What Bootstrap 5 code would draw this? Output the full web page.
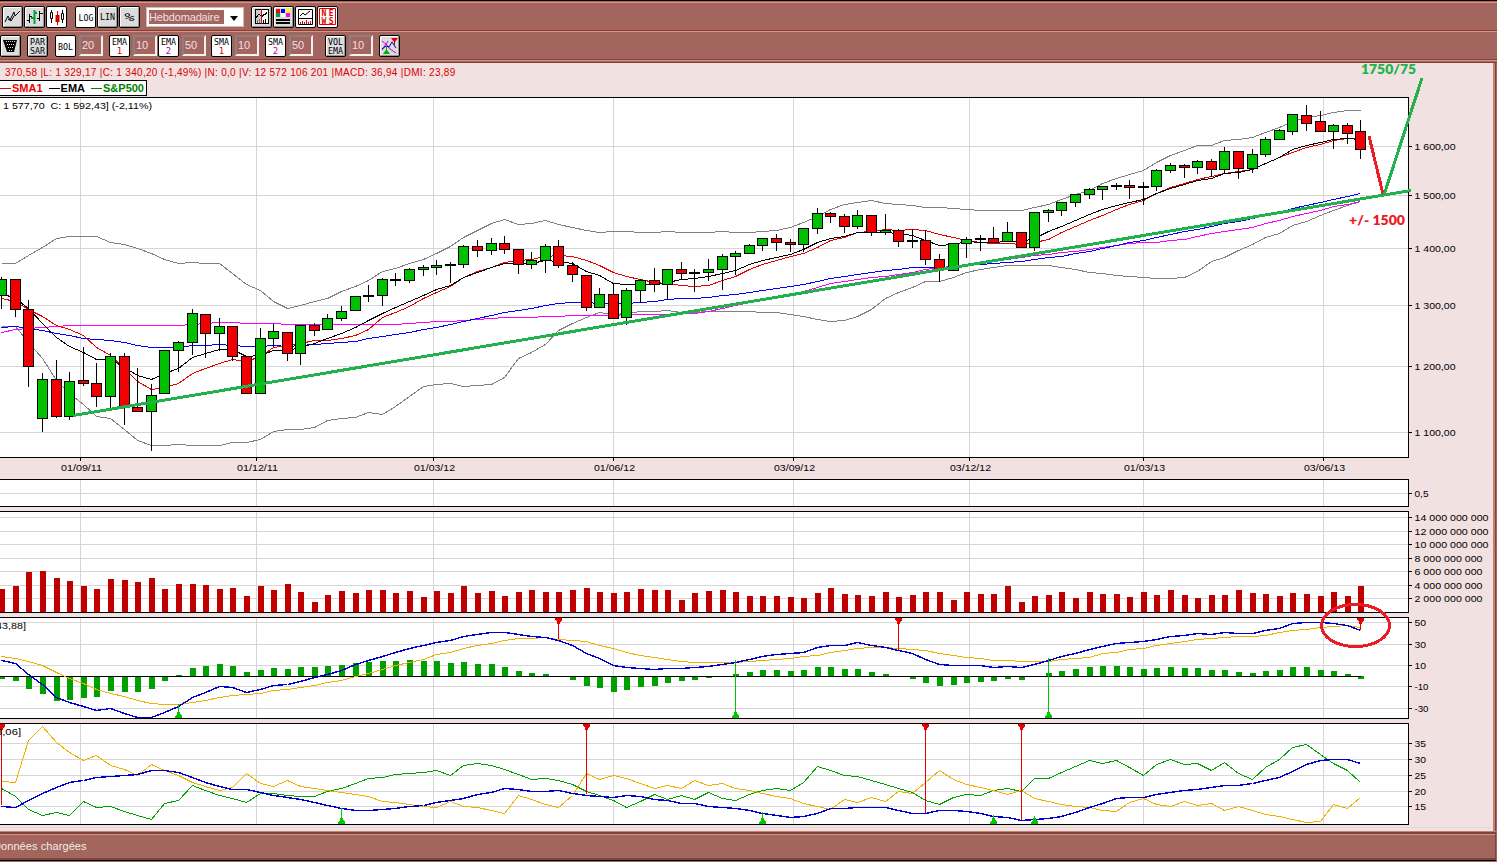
<!DOCTYPE html>
<html lang="fr">
<head>
    <meta charset="UTF-8">
    <meta name="viewport" content="width=device-width, initial-scale=1.0">
    <title>S&amp;P500 - Hebdomadaire</title>
    <link href="https://cdn.jsdelivr.net/npm/bootstrap@5.3.0/dist/css/bootstrap.min.css" rel="stylesheet">
    <style>
        body {
            width: 1497px;
            height: 862px;
            font-family: "Liberation Sans", Arial, sans-serif;
            background-color: #a3665e;
            overflow: hidden;
        }
        .top-edge {
            height: 1px;
            background-color: #000;
        }
        .tool-row {
            background-color: #a3665e;
            border-top: 1px solid #e88b80;
            border-bottom: 1px solid #7b443d;
        }
        .tool-row.first {
            height: 29px;
            margin-top: 1px;
            padding: 3px 0 0 2px;
        }
        .tool-row.second {
            height: 29px;
            padding: 3px 0 0 0;
        }
        .tool-btn {
            width: 21px;
            height: 22px;
            padding: 0;
            border: 1px solid #000;
            border-radius: 2px;
            background-color: #dcdcdc;
            box-shadow: inset 1px 1px 0 #fff, inset -1px -1px 0 #999;
            line-height: 0;
            flex: none;
        }
        .tool-btn.on {
            background-color: #fff;
            box-shadow: none;
        }
        .tool-btn svg {
            width: 19px;
            height: 20px;
            display: block;
        }
        .tool-btn text {
            font-family: "DejaVu Sans Mono", "Liberation Mono", monospace;
            text-anchor: middle;
        }
        .log-btn {
            margin-left: 7px;
        }
        .gap-1px {
            gap: 1px;
        }
        .period {
            width: 98px;
            height: 20px;
            background-color: #fff;
            border: 1px solid #d8b8b4;
            padding: 2px;
            margin: 1px 6px 0 5px;
            font-size: 11px;
            letter-spacing: -0.15px;
            color: #f1dfe6;
        }
        .period .period-text {
            width: 75px;
            background-color: #a3665e;
            line-height: 14px;
        }
        .period .arrow {
            border: 4px solid transparent;
            border-top: 5px solid #000;
            border-bottom: 0;
            margin: 6px 0 0 6px;
        }
        .tool-num {
            width: 24px;
            height: 21px;
            border: 2px solid;
            border-color: #8b8080 #f5efef #f5efef #8b8080;
            font-size: 11px;
            line-height: 16px;
            padding-left: 1px;
            color: #f1dfe6;
            flex: none;
        }
        .edge {
            height: 3px;
            background: linear-gradient(#e88b80 33%, #a3665e 33% 66%, #7b443d 66%);
        }
        .chart-area {
            width: 1495px;
            height: 768px;
            background-color: #f1e1e1;
            border-right: 2px solid #c87b71;
            box-shadow: 1px 0 0 #7b443d;
        }
        .quote-line {
            height: 17px;
            padding-left: 5px;
            color: #d80000;
            font-size: 10px;
            line-height: 19px;
            letter-spacing: 0.3px;
            white-space: pre;
        }
        .legend-box {
            width: 147px;
            height: 16px;
            background-color: #fff;
            border: 1px solid #000;
            border-left: 0;
            font-size: 11px;
            font-weight: bold;
        }
        .legend-box i {
            height: 1px;
            display: block;
            background-color: currentColor;
        }
        .chart {
            display: block;
            overflow: visible;
            shape-rendering: crispEdges;
        }
        .chart text {
            font-size: 9.7px;
        }
        .chart .note {
            font-family: Lato, "Open Sans", sans-serif;
            font-size: 13px;
            font-weight: 800;
        }
        .status-bar {
            height: 31px;
            border-top: 1px solid #c87b71;
            border-bottom: 1px solid #a3665e;
        }
        .status-bar .status-text {
            height: 28px;
            width: 1496px;
            border-top: 2px solid #7b443d;
            border-right: 1px solid #7b443d;
            border-bottom: 2px solid #7b443d;
            box-shadow: inset 0 1px 0 #e88b80, 0 1px 0 #000;
            color: #f3ecec;
            font-size: 11px;
            line-height: 24px;
            letter-spacing: 0.08px;
            text-indent: -7px;
            overflow: hidden;
        }
    </style>
</head>
<body class="d-flex flex-column">
    <div class="top-edge"></div>
    <!-- Chart type, scale and period -->
    <div class="tool-row first d-flex align-items-start gap-1px">
        <button class="tool-btn"><svg viewBox="0 0 19 20"><path d="M2 15L5 9L7 13L11 5L12 9L17 4M5 12L8 14L11 9" fill="none" stroke="#000"/></svg></button>
        <button class="tool-btn"><svg viewBox="0 0 19 20"><path d="M4.500 7V16M2 13.500H4M5 9.500H7M14.500 4V14M12 11.500H14M15 6.500H18" stroke="#000" fill="none"/><path d="M9.500 3V17M6 11H9M10 6H12" stroke="#00a040" stroke-width="2"/></svg></button>
        <button class="tool-btn on"><svg viewBox="0 0 19 20"><path d="M4.500 3V16M15.500 3V16" stroke="#000"/><path d="M3.500 5.500h2v6h-2zM14.500 6.500h2v6h-2z" fill="#fff" stroke="#000"/><path d="M10.500 4V18" stroke="#d00000"/><path d="M8.500 8h4v7h-4z" fill="#d00000"/></svg></button>
        <button class="tool-btn on log-btn"><svg viewBox="0 0 19 20"><text x="10" y="14" font-size="9" textLength="15" lengthAdjust="spacingAndGlyphs">LOG</text></svg></button>
        <button class="tool-btn"><svg viewBox="0 0 19 20"><text x="9.500" y="13" font-size="9" textLength="15" lengthAdjust="spacingAndGlyphs">LIN</text></svg></button>
        <button class="tool-btn"><svg viewBox="0 0 19 20"><text x="9.500" y="13.500" font-size="11" textLength="10" lengthAdjust="spacingAndGlyphs">%</text></svg></button>
        <div class="period d-flex"><div class="period-text">Hebdomadaire</div><div class="arrow"></div></div>
        <button class="tool-btn"><svg viewBox="0 0 19 20" shape-rendering="crispEdges"><path d="M3 2.500h13v14h-13z" fill="#fff" stroke="#000"/><path d="M3.500 3h5v13h-5z" fill="#ccc"/><path d="M4 11L7 7L10 10L12 7L13 8L15 5" fill="none" stroke="#000"/><path d="M11.500 13V16M13.500 12V16" stroke="#000"/><path d="M5.500 13V16M7.500 12V16" stroke="#777"/><path d="M9.500 2V17" stroke="#e00000"/></svg></button>
        <button class="tool-btn"><svg viewBox="0 0 19 20" shape-rendering="crispEdges"><path d="M2 2h4v4h-4z" fill="#f00"/><path d="M7 2h4v4h-4z" fill="#00f"/><path d="M12 2h4v4h-4z" fill="#ff0"/><path d="M2 6h4v4h-4z" fill="#00a040"/><path d="M7 6h4v4h-4z" fill="#fff"/><path d="M12 6h4v4h-4z" fill="#f0f"/><path d="M2 13h14M2 16h14" stroke="#000" stroke-width="2"/></svg></button>
        <button class="tool-btn on"><svg viewBox="0 0 19 20"><path d="M2.500 2.500h14v15h-14z" fill="none" stroke="#000"/><path d="M3 11.500h13M4 9L7 6L9 8L14 4" fill="none" stroke="#000"/><path d="M4.500 15V17M6.500 14V17M8.500 15V17M10.500 13V17M12.500 15V17M14.500 14V17" stroke="#e00000"/></svg></button>
        <button class="tool-btn on"><svg viewBox="0 0 19 20"><path d="M1.500 1.500h16v16h-16z" fill="none" stroke="#e00000"/><text x="9.500" y="9" font-size="8" font-weight="bold" fill="#e00000" textLength="12">NE</text><text x="9.500" y="16.500" font-size="8" font-weight="bold" fill="#e00000" textLength="12">WS</text></svg></button>
    </div>
    <!-- Indicators -->
    <div class="tool-row second d-flex align-items-start" id="indicators">
        <button class="tool-btn"><svg viewBox="0 0 19 20"><path d="M2 4h14l-3 12h-7z" fill="#000"/><path d="M5 5.500h9M6 8.500h8M7 11.500h6M8 14.500h4" stroke="#ddd" stroke-width="1" stroke-dasharray="1 1"/></svg></button>
    </div>
    <div class="edge"></div>

    <div class="chart-area">
        <div class="quote-line">370,58 |L: 1 329,17 |C: 1 340,20 (-1,49%) |N: 0,0 |V: 12 572 106 201 |MACD: 36,94 |DMI: 23,89</div>
        <div class="legend-box d-flex align-items-center"></div>
        <svg class="chart" id="chart" width="1493" height="734" viewBox="0 96 1493 734"></svg>
    </div>

    <div class="status-bar">
        <div class="status-text">Données chargées</div>
    </div>

    <script src="https://cdn.jsdelivr.net/npm/bootstrap@5.3.0/dist/js/bootstrap.bundle.min.js"></script>
    <script>
        // Indicator buttons: [margin before, line 1, line 2, second line colour, pressed, value]
        const indicators = [
            [6, "PAR", "SAR", "#000", false, null],
            [7, "BOL", "", "#000", true, "20"],
            [6, "EMA", "1", "#e00000", true, "10"],
            [1, "EMA", "2", "#b000b0", true, "50"],
            [5, "SMA", "1", "#e00000", true, "10"],
            [6, "SMA", "2", "#b000b0", true, "50"],
            [12, "VOL", "EMA", "#000", false, "10"],
        ];
        const row = document.getElementById("indicators");
        const fit = 'textLength="15" lengthAdjust="spacingAndGlyphs"';
        indicators.forEach(([gap, a, b, color, on, value]) => {
            const y = b ? 9 : 14;
            row.insertAdjacentHTML("beforeend",
                `<button class="tool-btn ${on ? "on" : ""}" style="margin-left:${gap}px"><svg viewBox="0 0 19 20">
                <text x="9.500" y="${y}" font-size="9" ${fit}>${a}</text>
                <text x="9.500" y="17.500" font-size="9" fill="${color}" ${b.length > 1 ? fit : ""}>${b}</text></svg></button>` +
                (value ? `<div class="tool-num" style="margin-left:3px">${value}</div>` : ""));
        });
        row.insertAdjacentHTML("beforeend",
            `<button class="tool-btn" style="margin-left:6px"><svg viewBox="0 0 19 20">
            <path d="M2 5L7 9L10 13L16 17M2 14L8 5" fill="none" stroke="#d000d0"/>
            <path d="M2 13L6 10L9 11L12 6L16 12" fill="none" stroke="#0000d0"/>
            <path d="M11 2h7l-3 4v4h-1v-4z" fill="#e00000"/><path d="M6 11h1v3l3 4h-7l3-4z" fill="#00b000"/></svg></button>`);

        // Legend
        document.querySelector(".legend-box").innerHTML = [
            ["#e60000", 11, "SMA1", 6], ["#000", 11, "EMA", 6], ["#008000", 11, "S&amp;P500", 0],
        ].map(([c, w, t, gap]) => `<span class="d-flex align-items-center" style="color:${c};margin-right:${gap}px"><i style="width:${w}px;margin-right:1px"></i>${t}</span>`).join("");

        // One value per week, as y on the chart
        const n = s => s.trim().split(/\s+/).map(Number);
        const X = i => Math.round(1.3 + 13.59 * i);

        // top, bottom, high, low, type (g up, r down, d doji)
        const candles = `279 295 277 308 g|279 309 279 316 r|309 366 300 386 r|379 418 373 431 g|379 416 360 417 r|381 416 372 419 g|380 383 347 385 r|383 396 363 406 r|356 396 353 408 g|356 407 353 424 r|407 411 368 411 r|395 411 384 450 g|350 393 350 393 g|342 350 341 371 g|313 342 309 354 g|314 333 314 357 r|326 333 318 350 g|326 356 326 360 r|356 393 356 393 r|338 393 328 393 g|331 338 324 346 g|332 353 332 360 r|325 353 325 364 g|325 330 323 335 r|318 329 314 329 g|311 318 306 320 g|296 310 296 310 g|295 296 285 301 d|279 295 278 305 g|279 280 273 285 d|269 280 268 282 g|267 269 265 275 g|265 267 260 274 g|264 265 262 282 d|246 264 245 267 g|246 250 240 256 r|243 250 238 254 g|243 249 236 253 r|249 264 249 273 r|260 264 252 268 g|246 260 244 272 g|246 265 240 267 r|265 274 262 281 r|275 307 275 310 r|294 307 288 307 g|294 318 283 318 r|290 317 288 324 g|280 290 279 302 g|280 284 268 291 r|269 284 269 299 g|269 273 262 278 r|272 273 269 291 d|269 272 259 280 g|256 269 254 289 g|253 256 251 274 g|245 253 244 253 g|238 245 238 250 g|238 242 234 250 r|242 244 239 251 r|228 244 228 251 g|213 228 208 233 g|213 216 212 222 r|216 226 214 232 r|215 226 210 228 g|215 232 215 235 r|230 232 214 234 g|230 241 229 246 r|240 241 229 247 d|240 259 230 264 r|259 269 254 281 r|243 270 243 270 g|239 243 237 257 g|238 239 235 250 d|238 242 227 242 r|232 241 222 241 g|232 247 232 247 r|212 247 212 250 g|210 212 209 221 g|202 210 202 215 g|194 202 194 206 g|189 194 188 198 g|186 189 186 199 g|185 186 183 189 d|185 187 180 198 r|186 187 182 204 d|170 186 169 190 g|165 170 163 172 g|165 167 164 177 r|161 167 160 173 g|161 169 159 176 r|151 169 147 172 g|151 168 151 178 r|154 168 149 172 g|139 154 137 156 g|130 139 129 139 g|114 131 114 134 g|115 123 105 130 r|121 131 111 131 r|125 131 124 148 g|125 133 123 143 r|131 149 120 158 r`.split("|");

        const bbUp = n(`263 263 255 247 238 236 236 236 242 244 248 253 259 263 262 263 263 273 284 290 301 308 305 301 298 291 286 280 271 268 263 259 253 246 237 230 223 219 224 223 220 224 227 230 232 231 231 232 232 231 232 232 232 231 232 232 231 230 227 222 216 209 204 202 200 203 204 205 207 207 208 209 210 210 210 210 207 204 199 194 190 183 178 174 170 162 155 150 145 145 140 139 137 132 127 121 117 115 112 110 110`);
        const bbLow = n(`326 326 342 358 380 393 404 416 418 429 440 445 445 444 445 445 445 442 442 439 431 429 429 427 420 418 417 412 414 406 396 386 384 383 386 385 384 377 358 352 344 330 323 317 312 314 313 311 311 310 312 312 311 311 311 311 312 312 314 316 319 321 320 316 309 298 292 287 281 281 277 272 269 267 265 265 265 265 267 269 272 273 275 276 277 278 278 277 271 261 257 250 244 237 233 225 221 215 210 205 201`);
        const sma50 = n(`332 329 328 327 326 325 325 325 325 325 325 325 325 325 324 323 322 322 323 323 323 324 324 324 324 324 324 324 324 324 323 322 321 321 320 319 318 317 317 317 316 316 315 315 315 315 314 314 314 314 313 313 311 308 305 302 299 297 294 291 287 283 281 279 277 276 274 272 269 267 266 264 262 261 259 257 255 254 252 251 249 247 245 243 242 242 240 239 236 233 231 229 227 223 220 216 213 210 206 204 201`);
        const ema50 = n(`327 326 328 330 333 335 338 339 340 342 345 347 347 347 345 345 344 345 346 346 345 346 345 344 343 342 341 338 336 334 332 329 327 324 321 318 315 312 310 308 305 303 302 302 303 303 303 302 301 299 298 298 297 295 294 292 290 288 286 284 281 278 276 274 272 270 269 267 267 267 267 265 264 263 262 261 259 257 256 253 251 248 245 242 240 237 234 231 229 226 223 221 218 215 212 208 205 202 199 196 193`);
        const sma10 = n(`298 301 309 316 325 329 335 347 355 368 381 389 387 383 373 368 363 359 361 356 347 345 343 340 340 338 335 329 317 312 306 298 292 286 277 271 267 262 260 259 256 255 256 260 265 272 276 279 282 283 285 286 285 280 276 269 264 260 256 253 247 240 237 232 231 229 230 229 230 234 237 240 242 243 243 244 242 239 232 226 220 215 209 204 200 193 187 183 179 176 173 171 169 163 157 152 147 144 140 138 138`);
        const ema10 = n(`293 298 308 323 337 346 352 359 359 367 375 379 373 368 357 353 349 349 356 355 350 350 347 343 338 333 327 320 313 307 301 295 289 285 277 272 267 263 263 263 260 261 263 271 275 283 284 284 284 282 279 278 276 273 270 264 260 257 254 249 242 238 236 232 232 232 233 235 240 245 244 241 242 242 241 241 238 231 226 220 214 209 205 202 199 193 188 184 180 178 173 172 169 163 157 149 145 142 139 138 139`);
        const volume = n(`589 586 572 571 578 581 586 589 579 580 582 578 589 584 584 585 589 588 596 586 590 584 592 602 595 591 593 590 590 593 591 597 591 593 586 593 591 596 592 590 592 592 590 588 592 593 592 589 590 590 600 593 591 590 592 596 596 596 597 598 593 588 594 595 596 592 597 595 592 592 600 592 594 594 586 602 596 595 592 598 592 594 594 597 592 595 590 595 598 595 595 590 593 594 596 593 594 596 592 596 586`);
        const hist = n(`679 681 689 694 701 700 698 697 691 692 692 689 681 675 668 666 664 666 672 670 668 669 667 667 666 665 663 662 661 661 660 661 661 663 662 664 664 667 671 673 674 676 680 686 688 692 690 687 686 683 681 680 678 676 674 672 670 670 671 670 667 667 669 669 672 674 676 679 683 686 685 683 682 681 679 680 676 673 671 669 667 666 666 667 669 668 667 668 668 670 670 672 673 671 670 667 667 670 671 674 679`);
        const macd = n(`660 663 674 684 697 702 706 710 708 713 717 717 712 706 697 692 686 687 692 689 685 684 681 677 674 670 664 660 656 652 648 645 642 640 636 634 632 632 634 636 637 640 645 653 658 665 667 668 669 668 668 667 666 664 662 659 656 654 653 652 647 645 645 642 645 647 650 653 659 664 665 665 665 667 666 667 664 660 656 653 649 646 643 642 641 639 636 635 633 634 632 633 633 630 628 623 622 622 623 625 630`);
        const signal = n(`656 658 661 665 672 678 683 689 693 696 700 703 704 704 702 700 697 695 694 693 690 689 687 685 682 680 676 673 669 665 662 659 654 652 648 645 643 640 638 638 637 639 640 641 645 648 652 655 657 659 661 662 662 662 662 661 660 659 658 656 655 652 650 648 647 647 648 649 650 653 655 657 658 660 660 661 661 661 659 658 657 653 652 649 648 645 643 641 639 638 637 636 636 635 632 630 629 627 626 625 627`);
        const diPlus = n(`788 796 809 815 812 815 801 807 806 811 815 819 803 800 785 790 795 798 802 793 793 795 796 796 791 788 783 778 777 774 773 772 770 775 765 763 765 769 774 779 778 780 784 791 795 800 807 801 794 799 795 799 792 798 800 794 790 788 790 782 766 770 775 776 780 784 788 792 800 804 797 794 795 790 788 791 778 778 772 766 760 763 760 767 775 764 759 764 763 770 762 773 779 767 759 747 744 754 763 770 782`);
        const diMinus = n(`781 782 740 726 742 752 760 755 765 769 775 764 770 775 782 786 790 787 773 783 786 780 786 788 790 792 794 796 801 802 804 806 807 801 806 807 810 813 795 799 804 807 795 773 779 775 778 783 788 785 788 780 785 783 788 790 793 796 798 803 806 809 799 802 797 801 791 793 782 770 779 784 787 790 794 790 798 801 804 806 807 810 811 802 798 804 806 801 805 803 810 806 810 814 816 819 822 821 804 808 797`);
        const adx = n(`806 807 800 793 787 782 780 777 776 775 774 770 770 772 777 782 786 789 789 792 795 797 799 802 805 808 810 810 809 808 806 805 802 800 798 794 792 788 789 791 791 790 793 795 796 797 795 796 799 800 803 803 806 807 808 810 813 815 817 816 813 808 808 807 807 807 810 813 813 810 810 811 813 816 817 820 819 818 816 812 807 803 798 797 797 794 792 790 789 787 785 785 783 780 777 771 764 760 759 759 763`);

        let out = "";
        const line = (x1, y1, x2, y2, c, w = 1) => out += `<path d="M${x1} ${y1}L${x2} ${y2}" stroke="${c}" stroke-width="${w}"/>`;
        const rect = (x, y, w, h, c) => out += `<rect x="${x}" y="${y}" width="${w}" height="${h}" fill="${c}"/>`;
        const curve = (ys, c, w = 1) => out += `<polyline points="${ys.map((y, i) => `${X(i) + .5},${y + .5}`).join(" ")}" fill="none" stroke="${c}" stroke-width="${w}"/>`;
        const text = (s, x, y, len, extra = "") => out += `<text x="${x}" y="${y}" ${len ? `textLength="${len}" lengthAdjust="spacingAndGlyphs"` : ""} ${extra}>${s}</text>`;

        const months = [[80, "01/09/11"], [256, "01/12/11"], [433, "01/03/12"], [613, "01/06/12"], [793, "03/09/12"], [969, "03/12/12"], [1143, "01/03/13"], [1323, "03/06/13"]];
        const panels = [
            [97, 457, [[146, "1 600,00"], [195, "1 500,00"], [248, "1 400,00"], [305, "1 300,00"], [366, "1 200,00"], [432, "1 100,00"]]],
            [479, 506, [[493, "0,5"]]],
            [511, 612, [[517, "14 000 000 000"], [531, "12 000 000 000"], [544, "10 000 000 000"], [558, "8 000 000 000"], [571, "6 000 000 000"], [585, "4 000 000 000"], [598, "2 000 000 000"]]],
            [617, 718, [[622, "50"], [644, "30"], [665, "10"], [686, "-10"], [708, "-30"]]],
            [723, 824, [[743, "35"], [759, "30"], [775, "25"], [791, "20"], [806, "15"]]],
        ];
        const labelWidth = { 14: 74, 13: 68, 8: 41, 3: 14, 2: 11.5 };
        panels.forEach(([top, bottom, ticks]) => {
            rect(0, top, 1408, bottom - top, "#fff");
            months.forEach(([x]) => rect(x, top, 1, bottom - top, "#d6d6d6"));
            ticks.forEach(([y, label]) => {
                rect(0, y, 1408, 1, "#d6d6d6");
                rect(1408, y, 4, 1, "#000");
                text(label, 1414.5, y + 4, labelWidth[label.length]);
            });
        });
        months.forEach(([x, label]) => {
            rect(x, 457, 1, 4, "#000");
            text(label, x - 19, 471, 41);
        });

        // Price panel
        curve(bbUp, "#808080");
        curve(bbLow, "#808080");
        curve(sma50, "#f0f");
        curve(ema50, "#00f");
        curve(sma10, "#e60000");
        curve(ema10, "#000");
        candles.forEach((c, i) => {
            const [top, bottom, high, low, type] = c.split(" ");
            const x = X(i);
            rect(x, high, 1, low - high + 1, "#000");
            rect(x - 5, top, 11, bottom - top + 1, "#000");
            if (type !== "d") rect(x - 4, +top + 1, 9, Math.max(1, bottom - top - 1), type === "g" ? "#00c000" : "#f00000");
        });

        // Volume, MACD histogram
        volume.forEach((y, i) => rect(X(i) - 2, y, 6, 612 - y, "#c00000"));
        hist.forEach((y, i) => rect(X(i) - 2, Math.min(y, 676), 6, Math.abs(y - 676), "#00a000"));
        rect(0, 676, 1361, 1, "#000");
        curve(signal, "#f0b000");
        curve(macd, "#0000d0", 1.4);
        curve(diPlus, "#00a000");
        curve(diMinus, "#f0b000");
        curve(adx, "#0000d0", 1.4);

        // Buy and sell signals
        const sell = (x, top, end) => {
            rect(x, top, 1, end - top, "#e60000");
            out += `<path d="M${x - 3} ${top}h7v2l-2 2v2h-3v-2l-2-2z" fill="#e60000"/>`;
        };
        const buy = (x, start, bottom) => {
            rect(x, start, 1, bottom - start, "#00c800");
            out += `<path d="M${x - 3} ${bottom}h7v-2l-2-2v-2h-3v2l-2 2z" fill="#00c800"/>`;
        };
        [[558, 639], [898, 650], [1360, 630]].forEach(([x, e]) => sell(x, 618, e));
        [[178, 704], [735, 660], [1048, 658]].forEach(([x, s]) => buy(x, s, 718));
        [[1, 805], [586, 794], [925, 813], [1021, 820]].forEach(([x, e]) => sell(x, 724, e));
        [[341, 808], [762, 812], [993, 815], [1034, 816]].forEach(([x, s]) => buy(x, s, 824));

        panels.forEach(([top, bottom]) => {
            rect(0, top, 1409, 1, "#000");
            rect(0, bottom, 1409, 1, "#000");
            rect(1408, top, 1, bottom - top, "#000");
        });
        rect(0, 827, 1492, 1, "#d9dcd8");

        text("1 577,70&#160; C: 1 592,43] (-2,11%)", 3, 109, 149);
        text("43,88]", -4, 629, 30);
        text("3,06]", -4, 735, 25);

        // Hand drawn scenario
        line(73, 415.5, 1411, 190.5, "#22b14c", 3);
        line(1369, 136, 1383, 194, "#ed1c24", 3);
        line(1384, 195, 1422, 78, "#22b14c", 3);
        out += `<ellipse cx="1355.500" cy="625.500" rx="34" ry="21" fill="none" stroke="#ed1c24" stroke-width="3"/>`;
        text("1750/75", 1361, 74, 55, 'class="note" fill="#22b14c"');
        text("+/- 1500", 1349, 225, 56, 'class="note" fill="#ed1c24"');
        document.getElementById("chart").innerHTML = out;
    </script>
</body>
</html>
